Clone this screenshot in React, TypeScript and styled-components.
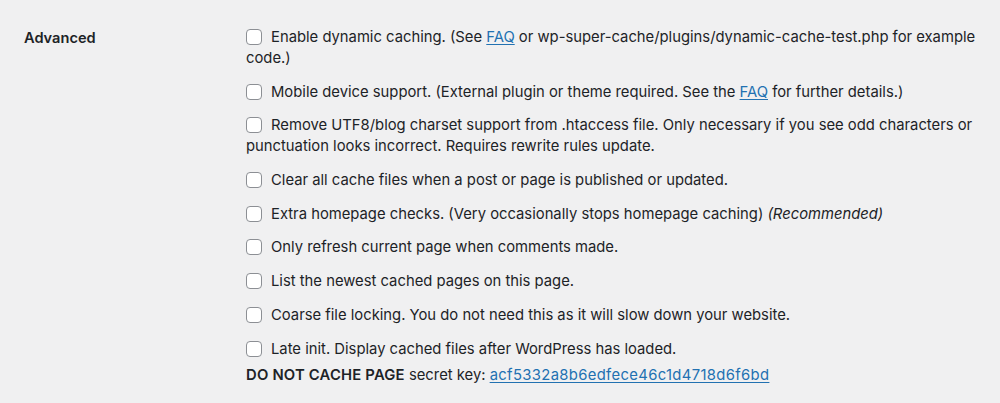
import React from 'react';
import styled, { createGlobalStyle } from 'styled-components';

const GlobalStyle = createGlobalStyle`
  html, body {
    margin: 0;
    padding: 0;
    background: #f0f0f1;
  }
  body {
    font-family: Inter, "Liberation Sans", Arial, sans-serif;
    font-size: 14.8px;
    color: #1d2327;
  }
`;

const FormRow = styled.div`
  display: grid;
  grid-template-columns: 222px 1fr;
  padding: 27px 10px 0 24px;
`;

const RowTitle = styled.div`
  font-weight: 600;
  font-size: 14.6px;
  line-height: 21px;
  padding-top: 1px;
`;

const OptionList = styled.div`
  display: flex;
  flex-direction: column;
  gap: 12.7px;
`;

const OptionLabel = styled.label`
  display: block;
  line-height: 21px;
`;

const Box = styled.input.attrs({ type: 'checkbox' })`
  appearance: none;
  width: 16px;
  height: 16px;
  margin: 0 9px 0 0;
  border: 1px solid #8c8f94;
  border-radius: 4px;
  background: #fff;
  vertical-align: -3px;
  box-sizing: border-box;
`;

const Link = styled.a<{ $wide?: boolean }>`
  color: #2271b1;
  text-decoration: underline;
  text-underline-offset: 2px;
  letter-spacing: ${p => (p.$wide ? '0.35px' : 'normal')};
`;

const Note = styled.em`
  font-style: italic;
`;

const KeyLine = styled.div`
  line-height: 21px;
  margin-top: -7px;

  strong {
    font-weight: 600;
    letter-spacing: 0.2px;
  }
`;

const options: React.ReactNode[] = [
  <>Enable dynamic caching. (See <Link href="#">FAQ</Link> or wp-super-cache/plugins/dynamic-cache-test.php for example code.)</>,
  <>Mobile device support. (External plugin or theme required. See the <Link href="#">FAQ</Link> for further details.)</>,
  <>Remove UTF8/blog charset support from .htaccess file. Only necessary if you see odd characters or punctuation looks incorrect. Requires rewrite rules update.</>,
  <>Clear all cache files when a post or page is published or updated.</>,
  <>Extra homepage checks. (Very occasionally stops homepage caching) <Note>(Recommended)</Note></>,
  <>Only refresh current page when comments made.</>,
  <>List the newest cached pages on this page.</>,
  <>Coarse file locking. You do not need this as it will slow down your website.</>,
  <>Late init. Display cached files after WordPress has loaded.</>,
];

const App: React.FC = () => {
  return (
    <>
      <GlobalStyle />
      <FormRow>
        <RowTitle>Advanced</RowTitle>
        <OptionList>
          {options.map((text, i) => (
            <OptionLabel key={i}>
              <Box />
              {text}
            </OptionLabel>
          ))}
          <KeyLine>
            <strong>DO NOT CACHE PAGE</strong> secret key:{' '}
            <Link href="#" $wide>acf5332a8b6edfece46c1d4718d6f6bd</Link>
          </KeyLine>
        </OptionList>
      </FormRow>
    </>
  );
};

export default App;
